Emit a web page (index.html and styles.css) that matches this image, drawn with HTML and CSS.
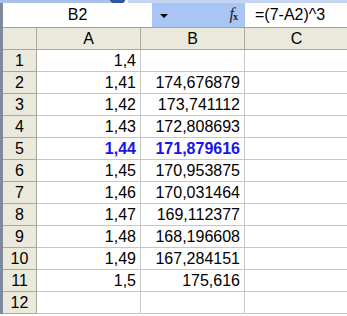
FILE: index.html
```html
<!DOCTYPE html>
<html lang="en">
<head>
    <meta charset="UTF-8">
    <title>Sheet</title>
    <link rel="stylesheet" href="styles.css">
</head>
<body>
    <div class="window">
        <div class="top-strip">
            <div class="strip-left"></div>
            <div class="strip-grip"></div>
            <div class="strip-right"></div>
        </div>
        <div class="formula-bar">
            <div class="name-box">B2</div>
            <div class="name-tools">
                <span class="arrow"></span>
                <span class="fx"><i>f</i><sub>x</sub></span>
            </div>
            <div class="formula">=(7-A2)^3</div>
        </div>
        <div class="sheet">
            <div class="corner"></div>
            <div class="col-head">A</div>
            <div class="col-head">B</div>
            <div class="col-head">C</div>

            <div class="row-head">1</div><div class="cell">1,4</div><div class="cell"></div><div class="cell"></div>
            <div class="row-head">2</div><div class="cell">1,41</div><div class="cell">174,676879</div><div class="cell"></div>
            <div class="row-head">3</div><div class="cell">1,42</div><div class="cell">173,741112</div><div class="cell"></div>
            <div class="row-head">4</div><div class="cell">1,43</div><div class="cell">172,808693</div><div class="cell"></div>
            <div class="row-head">5</div><div class="cell hl">1,44</div><div class="cell hl">171,879616</div><div class="cell"></div>
            <div class="row-head">6</div><div class="cell">1,45</div><div class="cell">170,953875</div><div class="cell"></div>
            <div class="row-head">7</div><div class="cell">1,46</div><div class="cell">170,031464</div><div class="cell"></div>
            <div class="row-head">8</div><div class="cell">1,47</div><div class="cell">169,112377</div><div class="cell"></div>
            <div class="row-head">9</div><div class="cell">1,48</div><div class="cell">168,196608</div><div class="cell"></div>
            <div class="row-head">10</div><div class="cell">1,49</div><div class="cell">167,284151</div><div class="cell"></div>
            <div class="row-head">11</div><div class="cell">1,5</div><div class="cell">175,616</div><div class="cell"></div>
            <div class="row-head">12</div><div class="cell"></div><div class="cell"></div><div class="cell"></div>
        </div>
    </div>
</body>
</html>
```

FILE: styles.css
```css
*{
    padding: 0;
    margin: 0;
    box-sizing: border-box;
}
body{
    width: 347px;
    height: 316px;
    overflow: hidden;
    background: #ffffff;
    font-family: "Liberation Sans", Arial, sans-serif;
    font-size: 16px;
    color: #000000;
}
.window{
    width: 360px;
    border-left: 3px solid #7f8a9c;
}
.top-strip{
    height: 3px;
    display: flex;
    margin-left: -3px;
}
.strip-left{
    width: 110px;
    background: #a7c1ea;
}
.strip-grip{
    width: 15px;
    background: #2e54a4;
    border-radius: 0 0 4px 4px;
}
.strip-right{
    flex: 1;
    background: #c3d5f2;
    border-left: 3px solid #ffffff;
}
.formula-bar{
    height: 25px;
    display: flex;
    border-bottom: 1px solid #a0a0a0;
}
.name-box{
    width: 149px;
    text-align: center;
    line-height: 23px;
    background: #ffffff;
}
.name-tools{
    width: 93px;
    background: #a9c5f3;
    display: flex;
    align-items: center;
    justify-content: space-between;
    padding: 0 7px 0 8px;
}
.arrow{
    width: 0;
    height: 0;
    border-left: 4px solid transparent;
    border-right: 4px solid transparent;
    border-top: 4px solid #000000;
    margin-top: 1px;
}
.fx{
    font-family: "Liberation Serif", "Times New Roman", serif;
    font-size: 16px;
    line-height: 20px;
    color: #222222;
}
.fx sub{
    font-size: 10px;
    font-weight: bold;
    vertical-align: -1px;
    margin-left: -1px;
}
.formula{
    flex: 1;
    padding-left: 10px;
    line-height: 23px;
}
.sheet{
    display: grid;
    grid-template-columns: 34px 104px 104px 104px;
    grid-template-rows: repeat(13, 22px);
}
.corner, .col-head, .row-head{
    background: #ebe8dc;
    border-right: 1px solid #aca899;
    border-bottom: 1px solid #aca899;
    text-align: center;
    line-height: 21px;
}
.cell{
    border-right: 1px solid #c6c6c6;
    border-bottom: 1px solid #c6c6c6;
    text-align: right;
    padding-right: 4px;
    line-height: 21px;
}
.hl{
    color: #1414f0;
    font-weight: bold;
}
```
